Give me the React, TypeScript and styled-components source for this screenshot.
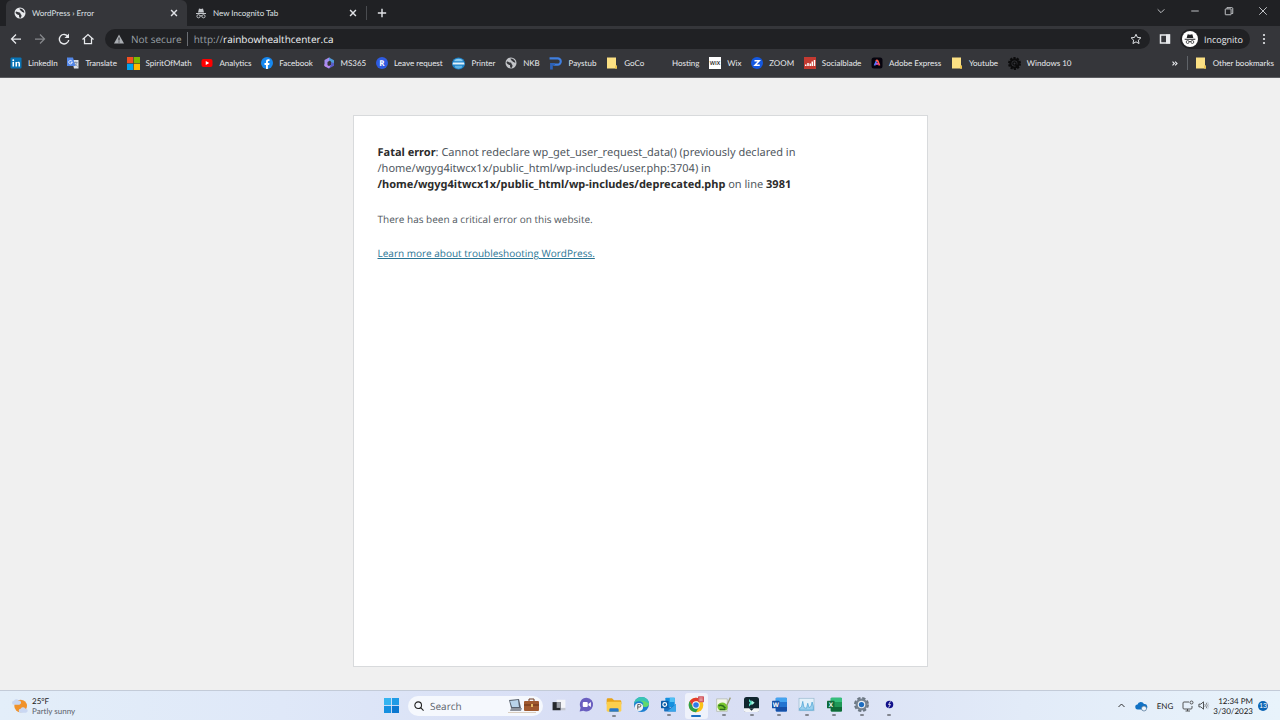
import React from "react";
import styled, { createGlobalStyle } from "styled-components";

const GlobalStyle = createGlobalStyle`
  *, *::before, *::after { box-sizing: border-box; }
  body { margin: 0; background: #f0f0f0; font-family: "Open Sans", "Noto Sans", sans-serif; text-rendering: geometricPrecision; }
  button, input { font: inherit; color: inherit; text-rendering: inherit; background: none; border: 0; padding: 0; margin: 0; outline: 0; }
  button { display: inline-flex; align-items: center; justify-content: center; }
  svg { display: block; flex: none; overflow: visible; }
  h1, p { margin: 0; }
`;

const smallFont = "Lato, sans-serif";

const Desktop = styled.div`
  min-height: 100vh;
  display: flex;
  flex-direction: column;
`;

/* ---------- browser chrome ---------- */

const TabStrip = styled.header`
  display: flex;
  align-items: stretch;
  height: 26px;
  padding-left: 6px;
  background: #202124;
  color: #dfe1e5;
  font-family: ${smallFont};
  font-size: 8px;
`;

const Tab = styled.div<{ $active?: boolean }>`
  display: flex;
  align-items: center;
  gap: 6px;
  width: ${(p) => (p.$active ? 181 : 179)}px;
  padding: 0 8px;
  border-radius: 6px 6px 0 0;
  background: ${(p) => (p.$active ? "#35363a" : "transparent")};
`;

const TabTitle = styled.span`
  flex: 1;
  white-space: nowrap;
`;

const Separator = styled.span<{ $color: string }>`
  width: 1px;
  height: 14px;
  align-self: center;
  flex: none;
  background: ${(p) => p.$color};
`;

const IconButton = styled.button<{ $width?: number }>`
  width: ${(p) => p.$width ?? 24}px;
  flex: none;
`;

const WindowControls = styled.div`
  display: flex;
  height: 22px;
  margin-left: auto;
`;

const Toolbar = styled.div`
  display: flex;
  align-items: center;
  height: 26px;
  padding: 0 4px;
  background: #35363a;
  color: #e8eaed;
`;

const AddressBar = styled.form`
  display: flex;
  align-items: center;
  flex: 1;
  height: 20px;
  margin: 0 4px 0 5px;
  padding: 0 8px;
  border-radius: 10px;
  background: #202124;
  color: #9aa0a6;
  font-size: 10px;
`;

const SecurityButton = styled.button`
  gap: 6px;
  margin-right: 5px;
`;

const Scheme = styled.label`
  margin-left: 6px;
`;

const AddressInput = styled.input`
  flex: 1;
  min-width: 0;
  color: #f1f3f4;
`;

const ProfileButton = styled.button`
  gap: 6px;
  height: 20px;
  margin: 0 2px 0 3px;
  padding: 0 7px 0 2px;
  border-radius: 10px;
  background: #202124;
  font-size: 9px;
`;

const BookmarksBar = styled.nav`
  display: flex;
  align-items: center;
  height: 26px;
  padding: 0 6px 3px 10px;
  border-bottom: 1px solid #5b5c60;
  background: #35363a;
  color: #e8eaed;
  font-family: ${smallFont};
  font-size: 8px;
`;

const BookmarkList = styled.div`
  display: flex;
  justify-content: space-between;
  flex: 1;
  margin-right: 100px;
`;

const Bookmark = styled.a`
  display: flex;
  align-items: center;
  gap: 6px;
  color: inherit;
  text-decoration: none;
  white-space: nowrap;
`;

const Overflow = styled.div`
  display: flex;
  align-items: center;
  gap: 7px;
`;

/* ---------- web page ---------- */

const Page = styled.main`
  flex: 1;
  display: flex;
  padding: 37px 24px 23px;
`;

const ErrorCard = styled.section`
  width: 100%;
  max-width: 575px;
  margin: 0 auto;
  padding: 29px 24px;
  border: 1px solid #d8dadc;
  background: #fff;
  color: #50575e;
  font-size: 10px;
  line-height: 16px;

  p + p { margin-top: 18px; }
  a { color: #2a7595; }
`;

const FatalError = styled.p`
  max-width: 460px;
  margin-bottom: 18px;
  font-family: "Noto Sans", sans-serif;
  font-size: 11px;

  b { color: #2c2c2c; }
`;

/* ---------- taskbar ---------- */

const Taskbar = styled.footer`
  display: grid;
  grid-template-columns: 1fr auto 1fr;
  height: 30px;
  border-top: 1px solid #c3cbd8;
  background: linear-gradient(90deg, #e3eef9 0%, #dfe8f8 22%, #d8def5 45%, #d9dff4 60%, #e2ebf8 80%, #e8f3fb 100%);
  color: #222;
  font-family: ${smallFont};
  font-size: 8px;
  line-height: 10px;
`;

const Weather = styled.button`
  justify-self: start;
  gap: 4px;
  margin-left: 12px;
  text-align: left;
`;

const Muted = styled.span`
  color: #5b626b;
`;

const Pinned = styled.div`
  display: flex;
  align-items: center;
`;

const SearchBox = styled.label`
  display: flex;
  align-items: center;
  gap: 6px;
  width: 135px;
  height: 20px;
  margin: 0 2px 0 3px;
  padding: 0 2px 0 6px;
  border-radius: 10px;
  background: #f5f8fd;
  font-family: "Open Sans", sans-serif;
  font-size: 10px;

  input { flex: 1; min-width: 0; }
  input::placeholder { color: #5b626b; opacity: 1; }
`;

const Apps = styled.div`
  display: grid;
  grid-template-columns: repeat(13, 1fr);
  width: 358px;
`;

const AppButton = styled.button<{ $state: "idle" | "open" | "active" }>`
  flex-direction: column;
  gap: 2px;
  height: 26px;
  margin: 0 2px;
  padding-top: 2px;
  border-radius: 3px;
  background: ${(p) => (p.$state === "active" ? "#eff2fb" : "transparent")};

  &::after {
    content: "";
    width: ${(p) => (p.$state === "active" ? 10 : 4)}px;
    height: 2px;
    border-radius: 1px;
    background: ${(p) => ({ idle: "transparent", open: "#82868f", active: "#1a6fc4" })[p.$state]};
  }
`;

const Tray = styled.div`
  display: flex;
  align-items: center;
  justify-self: end;
  padding-right: 12px;
`;

const TrayButton = styled.button<{ $width: number }>`
  width: ${(p) => p.$width}px;
`;

const Clock = styled.time`
  width: 40px;
  margin: 0 5px 0 4px;
  text-align: right;
`;

const Lines = styled.span`
  display: flex;
  flex-direction: column;
`;

const Count = styled.button`
  width: 10px;
  height: 10px;
  border-radius: 5px;
  background: #0a64b4;
  color: #fff;
  font-size: 7px;
`;

/* ---------- icons ---------- */

type SvgProps = { size?: number; box?: number; children: React.ReactNode };
const Svg = ({ size = 12, box = 24, children }: SvgProps) => (
  <svg width={size} height={size} viewBox={`0 0 ${box} ${box}`} fill="none" aria-hidden="true">
    {children}
  </svg>
);

const Line = ({ d, size = 12, width = 2, color = "currentColor" }: { d: string; size?: number; width?: number; color?: string }) => (
  <Svg size={size}>
    <path d={d} stroke={color} strokeWidth={width} />
  </Svg>
);

const Globe = ({ color = "#e8eaed", bg = "#35363a" }) => (
  <Svg>
    <circle cx="12" cy="12" r="11" fill={color} />
    <path d="M4 9c3 0 4 2 7 2 3 0 1 3 3 4s1 4-1 7c-3 0-3-4-3-6-3 0-6-2-7-5zM11 3c0 3 2 2 2 4 0 1 3 1 3 3 2 0 3 2 5 1-1-4-4-8-10-8z" fill={bg} />
  </Svg>
);

const Spy = ({ size = 12, color = "#c4c7cb" }) => (
  <Svg size={size}>
    <path d="M8 3l4 1 4-1 2 8H6zM2 12h20v2H2z" fill={color} />
    <g stroke={color} strokeWidth="1.800">
      <circle cx="7" cy="18.500" r="3.200" />
      <circle cx="17" cy="18.500" r="3.200" />
      <path d="M10 18q2-1.500 4 0" />
    </g>
  </Svg>
);

const Folder = () => (
  <Svg>
    <path d="M2 1h18v15l2 2v5H2z" fill="#fbe083" />
    <path d="M18 17l4 1v5h-4z" fill="#efc64e" />
  </Svg>
);

const glyphFont = '"Open Sans", sans-serif';

const LinkedInIcon = () => (
  <Svg>
    <rect x="1" y="1" width="22" height="22" rx="2" fill="#0a74b5" />
    <path d="M5 10h3v9H5zM11 10h3v9h-3zM14 13c0-2 3-2 3 0v6h3v-6c0-4-4-4-6-2z" fill="#fff" />
    <circle cx="6.500" cy="6.500" r="1.900" fill="#fff" />
  </Svg>
);

const TranslateIcon = () => (
  <Svg>
    <path d="M10 6h13v17H14z" fill="#dce0e6" />
    <path d="M0 1h12l5 17H0z" fill="#5387e8" />
    <path d="M10 8.500a3.500 3.500 0 1 0 .5 2H7.500" stroke="#fff" strokeWidth="1.700" />
    <path d="M14 11h7M17.500 9v2M20 11c-1 4-3 5-4 6M16 13l5 6" stroke="#6b7c98" strokeWidth="1.400" />
  </Svg>
);

const MicrosoftIcon = () => (
  <Svg size={13}>
    <path d="M0 0h11.500v11.500H0z" fill="#f25022" />
    <path d="M12.500 0H24v11.500H12.500z" fill="#7fba00" />
    <path d="M0 12.500h11.500V24H0z" fill="#00a4ef" />
    <path d="M12.500 12.500H24V24H12.500z" fill="#ffb900" />
  </Svg>
);

const YouTubeIcon = () => (
  <Svg>
    <rect x="1" y="4" width="22" height="16" rx="4" fill="#f00" />
    <path d="M9.500 8l7 4-7 4z" fill="#fff" />
  </Svg>
);

const FacebookIcon = () => (
  <Svg>
    <circle cx="12" cy="12" r="12" fill="#1688f0" />
    <path d="M10 24v-8H7v-4h3V9.500c0-3.500 2-5 4.500-5l2.500.2V8h-1.500C14 8 13.800 9 13.800 10v2H17l-.6 4h-2.600v8z" fill="#fff" />
  </Svg>
);

const Microsoft365Icon = () => (
  <Svg>
    <path d="M12 1L3 6v12l6 3.500V10l4-2.500V1z" fill="#a58cf0" />
    <path d="M12 1l10 5.500V13l-6-2V9l-4-2z" fill="#4f9bd8" />
    <path d="M22 12v5.500L12 23l-4-2 8-5v-5z" fill="#5a5cc8" />
    <path d="M3 14v4l9 5 4-7-4 2z" fill="#b98af0" />
  </Svg>
);

const LeaveIcon = () => (
  <Svg>
    <circle cx="12" cy="12" r="12" fill="#2f5be0" />
    <text x="12" y="17.500" textAnchor="middle" fontFamily={glyphFont} fontWeight="700" fontSize="16" fill="#fff">R</text>
  </Svg>
);

const PrinterIcon = () => (
  <Svg size={13}>
    <ellipse cx="12" cy="12" rx="12" ry="11" fill="#1d83c9" />
    <path d="M5 5q7-4 14 0l1 3H4z" fill="#8acbf0" />
    <path d="M2 10h20l1 4H1z" fill="#e2f1fa" />
    <path d="M5 16h14l-1 4q-6 3-12 0z" fill="#5fb2e2" />
  </Svg>
);

const PaystubIcon = () => (
  <Svg size={13}>
    <path d="M1 2.500h15a5 5 0 0 1 0 11.500H8" stroke="#3f7fe0" strokeWidth="4" />
    <path d="M2 11h9v4H7v8H2z" fill="#2d62b8" />
  </Svg>
);

const WixIcon = () => (
  <Svg>
    <rect width="24" height="24" fill="#fff" />
    <text x="12" y="16" textAnchor="middle" fontFamily={glyphFont} fontWeight="600" fontSize="11" fill="#111">WIX</text>
  </Svg>
);

const ZoomIcon = () => (
  <Svg>
    <circle cx="12" cy="12" r="12" fill="#1458e0" />
    <path d="M7 7.500h9.500L8 16.500h9.500" stroke="#fff" strokeWidth="3" />
  </Svg>
);

const SocialbladeIcon = () => (
  <Svg>
    <rect width="24" height="24" fill="#c43a31" />
    <path d="M2 15h3v3H2zM6.500 12h3v6h-3zM11 13h3v5h-3zM15 9h3v9h-3zM19.500 6h3v12h-3z" fill="#fff" />
  </Svg>
);

const AdobeIcon = () => (
  <Svg>
    <rect x="1" y="1" width="22" height="22" rx="5" fill="#05030d" />
    <path d="M7 17L11 8" stroke="#4a7dff" strokeWidth="3.500" />
    <path d="M10 8q2-3 4 1l3 8" stroke="#ff5a4c" strokeWidth="3.500" />
    <path d="M10 15q2-3 4 0" stroke="#e050e0" strokeWidth="3" />
  </Svg>
);

const DarkGear = () => (
  <Svg size={13}>
    <circle cx="12" cy="12" r="10" stroke="#0c0c0d" strokeWidth="4" strokeDasharray="3.900 2.380" />
    <circle cx="12" cy="12" r="7.500" stroke="#0c0c0d" strokeWidth="4" />
    <circle cx="12" cy="12" r="3" stroke="#0c0c0d" strokeWidth="2.500" />
    <path d="M14 14l5 5" stroke="#0c0c0d" strokeWidth="3.500" />
  </Svg>
);

const bookmarks: [string, React.ReactNode][] = [
  ["LinkedIn", <LinkedInIcon />],
  ["Translate", <TranslateIcon />],
  ["SpiritOfMath", <MicrosoftIcon />],
  ["Analytics", <YouTubeIcon />],
  ["Facebook", <FacebookIcon />],
  ["MS365", <Microsoft365Icon />],
  ["Leave request", <LeaveIcon />],
  ["Printer", <PrinterIcon />],
  ["NKB", <Globe color="#c3c5c9" />],
  ["Paystub", <PaystubIcon />],
  ["GoCo", <Folder />],
  ["Hosting", <Svg>{null}</Svg>],
  ["Wix", <WixIcon />],
  ["ZOOM", <ZoomIcon />],
  ["Socialblade", <SocialbladeIcon />],
  ["Adobe Express", <AdobeIcon />],
  ["Youtube", <Folder />],
  ["Windows 10", <DarkGear />],
];

const OfficeIcon = ({ letter, dark, mid, light }: { letter: string; dark: string; mid: string; light: string }) => (
  <Svg size={15}>
    <rect x="6" y="1" width="18" height="22" rx="1.500" fill={mid} />
    <path d="M6 2.500A1.500 1.500 0 0 1 7.500 1H15v7H6zM15 1h7.500A1.500 1.500 0 0 1 24 2.500V8h-9z" fill={light} />
    <path d="M6 16h18v5.500a1.500 1.500 0 0 1-1.500 1.500h-15A1.500 1.500 0 0 1 6 21.500z" fill={dark} />
    <rect x="0" y="6" width="12" height="12" rx="1" fill={dark} />
    <text x="6" y="15.500" textAnchor="middle" fontFamily={glyphFont} fontWeight="700" fontSize="10" fill="#fff">{letter}</text>
  </Svg>
);

const apps: [string, "idle" | "open" | "active", React.ReactNode][] = [
  ["Task view", "idle", (
    <Svg size={14}>
      <path d="M8 3h15v14H8z" fill="#f4f5f8" />
      <path d="M1 7h14v14H1z" fill="#26282c" />
      <path d="M8 7h7v10H8z" fill="#9a9da5" />
      <path d="M15 17h8v4h-8z" fill="#c4c7cf" />
    </Svg>
  )],
  ["Chat", "idle", (
    <Svg size={15}>
      <path d="M12 1a11 11 0 1 1-5 21l-6 1 1.500-6A11 11 0 0 1 12 1z" fill="#6a5fc0" />
      <rect x="6" y="8" width="8" height="8" rx="1.500" fill="#fff" />
      <path d="M15 11l4-3v8l-4-3z" fill="#fff" />
    </Svg>
  )],
  ["File Explorer", "open", (
    <Svg size={16}>
      <path d="M1 4q0-2 2-2h6l3 3h9q2 0 2 2v4H1z" fill="#e8a317" />
      <rect x="1" y="7" width="22" height="15" rx="2" fill="#fccf4d" />
      <path d="M5 22v-3q0-2 2-2h10q2 0 2 2v3z" fill="#2878c8" />
    </Svg>
  )],
  ["Edge", "idle", (
    <Svg size={15}>
      <circle cx="12" cy="12" r="12" fill="#1b7fd0" />
      <path d="M0 11C1 4 6 0 12 0c8 0 12 5 12 10 0 4-3 6-6 6-4 0-4-2-3-4C15 7 5 4 0 11z" fill="#39c5b4" />
      <path d="M24 10c0 4-3 6-6 6-4 0-4-2-3-4 1-4-3-6-6-6 8-1 11 3 15 4z" fill="#62d86c" />
      <circle cx="8" cy="16" r="6.500" fill="#f1f3f5" />
      <path d="M6 20v-8h3a2 2 0 0 1 0 4H6" stroke="#555" strokeWidth="1.500" />
    </Svg>
  )],
  ["Outlook", "open", (
    <Svg size={15}>
      <rect x="7" y="1" width="15" height="15" rx="1" fill="#1490df" />
      <path d="M14 1h8v7h-8z" fill="#50c0f5" />
      <path d="M5 11l10 6 9-6v11q0 1-1 1H6q-1 0-1-1z" fill="#1a70c0" />
      <path d="M24 11v12H10z" fill="#38a5ea" />
      <rect x="0" y="6" width="12" height="12" rx="1" fill="#0a5ba8" />
      <circle cx="6" cy="12" r="3" stroke="#fff" strokeWidth="1.900" />
    </Svg>
  )],
  ["Chrome", "active", (
    <Svg size={16}>
      <circle cx="12" cy="12" r="11" fill="#fbc116" />
      <path d="M2.500 6.500A11 11 0 0 1 21.500 6.500H12L7.200 14.700z" fill="#e33b2e" />
      <path d="M2.500 6.500A11 11 0 0 0 12 23l4.800-8.200H7.200z" fill="#2b9f4b" />
      <circle cx="12" cy="12" r="5.500" fill="#fff" />
      <circle cx="12" cy="12" r="4.200" fill="#2f79e8" />
      <rect x="15" y="-1" width="9" height="9" rx="1" fill="#d2545c" />
      <path d="M17 1.500h5M17 3.500h5M17 5.500h5" stroke="#f5c8ca" />
    </Svg>
  )],
  ["Notepad++", "open", (
    <Svg size={15}>
      <path d="M1 3h17v20H1z" fill="#f4f6ec" stroke="#a8b0a0" />
      <path d="M3 12q6-6 13-1 5 4 1 10H5q-4-4-2-9z" fill="#78c62e" />
      <path d="M4 14q6-3 11 4M6 20h9" stroke="#2e6e1c" strokeWidth="2.500" />
      <path d="M23 1l-6 13" stroke="#9a9a72" strokeWidth="2" />
    </Svg>
  )],
  ["Filmora", "open", (
    <Svg size={15}>
      <rect width="24" height="24" rx="4" fill="#10262f" />
      <path d="M8 3l6 6-6 6V11l2-2-2-2z" fill="#4fe0c2" />
      <path d="M12 5l5 4-5 4z" fill="#a9f5e4" />
      <path d="M0 18h24v3q0 3-3 3H3q-3 0-3-3z" fill="#f3f5f7" />
      <path d="M8 18h8l-4 4z" fill="#10262f" />
    </Svg>
  )],
  ["Word", "open", <OfficeIcon letter="W" dark="#1650a8" mid="#2374d0" light="#45a4f0" />],
  ["Task Manager", "open", (
    <Svg size={15}>
      <rect x="0" y="2" width="24" height="20" fill="#e3f1fa" stroke="#93b5cc" />
      <path d="M1 18l3-2 2-9 2 10 4 1 2-8 2 7 3-2 2-7 2 7v6H1z" fill="#9bd0ee" stroke="#3f9bd0" />
    </Svg>
  )],
  ["Excel", "open", <OfficeIcon letter="X" dark="#0e6b38" mid="#1f9857" light="#35bf7c" />],
  ["Settings", "open", (
    <Svg size={15}>
      <circle cx="12" cy="12" r="10" stroke="#6b7682" strokeWidth="4" strokeDasharray="5 2.854" />
      <circle cx="12" cy="12" r="9.500" fill="#76828f" />
      <circle cx="12" cy="12" r="6" fill="#e9edf2" />
      <circle cx="12" cy="12" r="4.200" fill="#1c6cc0" />
    </Svg>
  )],
  ["Recorder", "open", (
    <Svg size={15}>
      <circle cx="12" cy="12" r="6" fill="#10108a" />
      <path d="M13.500 7l-3 5h3l-3 5" stroke="#fff" strokeWidth="1.300" />
    </Svg>
  )],
];

const closeMark = "M5 5l14 14M19 5L5 19";

export default function App() {
  return (
    <Desktop>
      <GlobalStyle />
      <TabStrip>
        <Tab $active>
          <Globe />
          <TabTitle>WordPress › Error</TabTitle>
          <IconButton $width={10} aria-label="Close tab"><Line d={closeMark} size={10} width={3.5} /></IconButton>
        </Tab>
        <Tab>
          <Spy />
          <TabTitle>New Incognito Tab</TabTitle>
          <IconButton $width={10} aria-label="Close tab"><Line d={closeMark} size={10} width={3.5} /></IconButton>
        </Tab>
        <Separator $color="#4a4c50" />
        <IconButton $width={30} aria-label="New tab"><Line d="M12 2v20M2 12h20" size={10} width={3.5} /></IconButton>
        <WindowControls>
          <IconButton $width={34} aria-label="Search tabs"><Line d="M4 8l8 8 8-8" size={10} /></IconButton>
          <IconButton $width={34} aria-label="Minimize"><Line d="M3 12h18" size={10} /></IconButton>
          <IconButton $width={34} aria-label="Restore"><Line d="M3 8q0-1 1-1h12q1 0 1 1v12q0 1-1 1H4q-1 0-1-1zM7 6V4h12q2 0 2 2v12h-3" size={10} /></IconButton>
          <IconButton $width={34} aria-label="Close window"><Line d="M3 3l18 18M21 3L3 21" size={10} /></IconButton>
        </WindowControls>
      </TabStrip>

      <Toolbar>
        <IconButton aria-label="Back"><Line d="M22 12H3M12 3l-9 9 9 9" width={2.5} /></IconButton>
        <IconButton aria-label="Forward"><Line d="M2 12h19M12 3l9 9-9 9" width={2.5} color="#85878b" /></IconButton>
        <IconButton aria-label="Reload">
          <Svg>
            <path d="M20 7a9.500 9.500 0 1 0 1.500 7" stroke="currentColor" strokeWidth="2.800" />
            <path d="M22 1v9h-9z" fill="currentColor" />
          </Svg>
        </IconButton>
        <IconButton aria-label="Home"><Line d="M1 13L12 3l11 10M5 11v10h14V11" width={2.5} /></IconButton>
        <AddressBar onSubmit={(e) => e.preventDefault()}>
          <SecurityButton type="button">
            <Svg>
              <path d="M12 3l10 18H2z" fill="#a9adb2" />
              <path d="M12 9v6M12 17v2" stroke="#202124" strokeWidth="2" />
            </Svg>
            Not secure
          </SecurityButton>
          <Separator $color="#6a6d72" />
          <Scheme htmlFor="address">http://</Scheme>
          <AddressInput id="address" defaultValue="rainbowhealthcenter.ca" spellCheck={false} />
          <IconButton type="button" $width={12} aria-label="Bookmark this page">
            <Line d="M12 2.500l2.900 6.300 6.900.8-5.100 4.700 1.400 6.800-6.100-3.400-6.100 3.400 1.400-6.800-5.100-4.700 6.900-.8z" color="#dfe1e5" />
          </IconButton>
        </AddressBar>
        <IconButton $width={23} aria-label="Side panel">
          <Svg>
            <path d="M3 4h18v16H3z" stroke="currentColor" strokeWidth="3" />
            <path d="M14 3h8v18h-8z" fill="currentColor" />
          </Svg>
        </IconButton>
        <ProfileButton>
          <Svg size={16}>
            <circle cx="12" cy="12" r="12" fill="#fff" />
            <path d="M8.500 5l3.500.8 3.500-.8 1.500 5.500H7zM4 11.500h16V13H4z" fill="#202124" />
            <g stroke="#202124" strokeWidth="1.100">
              <circle cx="8.500" cy="16.500" r="2.200" />
              <circle cx="15.500" cy="16.500" r="2.200" />
              <path d="M10.500 16q1.500-1 3 0" />
            </g>
          </Svg>
          Incognito
        </ProfileButton>
        <IconButton aria-label="Menu">
          <Svg>
            <g fill="currentColor">
              <circle cx="12" cy="4" r="2.200" />
              <circle cx="12" cy="12" r="2.200" />
              <circle cx="12" cy="20" r="2.200" />
            </g>
          </Svg>
        </IconButton>
      </Toolbar>

      <BookmarksBar>
        <BookmarkList>
          {bookmarks.map(([label, icon]) => (
            <Bookmark href="#" key={label}>
              {icon}
              {label}
            </Bookmark>
          ))}
        </BookmarkList>
        <Overflow>
          <IconButton $width={8} aria-label="More bookmarks"><Line d="M4 7l5 5-5 5M11 7l5 5-5 5" size={9} width={3} /></IconButton>
          <Separator $color="#5f6368" />
          <Bookmark href="#"><Folder />Other bookmarks</Bookmark>
        </Overflow>
      </BookmarksBar>

      <Page>
        <ErrorCard>
          <FatalError>
            <b>Fatal error</b>: Cannot redeclare wp_get_user_request_data() (previously declared in
            <br />
            /home/wgyg4itwcx1x/public_html/wp-includes/user.php:3704) in
            <br />
            <b>/home/wgyg4itwcx1x/public_html/wp-includes/deprecated.php</b> on line <b>3981</b>
          </FatalError>
          <p>There has been a critical error on this website.</p>
          <p><a href="#">Learn more about troubleshooting WordPress.</a></p>
        </ErrorCard>
      </Page>

      <Taskbar>
        <Weather>
          <Svg size={16}>
            <circle cx="13" cy="12" r="9.500" fill="#f0922b" />
            <path d="M3 10a3 3 0 0 1 0-6 4 4 0 0 1 7 0 3 3 0 0 1 1 6z" fill="#c9d7f2" />
            <path d="M13 22a3 3 0 0 1 0-6 4 4 0 0 1 7 0 3 3 0 0 1 1 6z" fill="#c9d7f2" />
          </Svg>
          <Lines>
            <span>25°F</span>
            <Muted>Partly sunny</Muted>
          </Lines>
        </Weather>

        <Pinned>
          <IconButton $width={28} aria-label="Start">
            <Svg size={15}>
              <path d="M0 0h11.300v11.300H0z" fill="#35b4f0" />
              <path d="M12.700 0H24v11.300H12.700z" fill="#1f9be6" />
              <path d="M0 12.700h11.300V24H0z" fill="#1590e0" />
              <path d="M12.700 12.700H24V24H12.700z" fill="#0b78d0" />
            </Svg>
          </IconButton>
          <SearchBox>
            <Svg size={10}>
              <circle cx="10" cy="10" r="8" stroke="#222" strokeWidth="2.600" />
              <path d="M16 16l7 7" stroke="#222" strokeWidth="2.600" />
            </Svg>
            <input type="search" placeholder="Search" aria-label="Search" />
            <svg width="34" height="16" viewBox="0 0 34 16" aria-hidden="true">
              <path d="M1 14h28v1H1z" fill="#d9cdbf" />
              <path d="M2 2l10-1 2 9H4z" fill="#58616e" />
              <path d="M3 3l8-1 1 7H5z" fill="#b9d3ea" />
              <path d="M4 10h11l-1 3H3z" fill="#8d929c" />
              <path d="M22 4V1h5v3" fill="none" stroke="#6e3b20" />
              <rect x="17" y="3" width="15" height="10" rx="1" fill="#a0592f" />
              <path d="M17 7h15" stroke="#693317" />
              <path d="M24 6h2v3h-2z" fill="#e8bb66" />
            </svg>
          </SearchBox>
          <Apps>
            {apps.map(([name, state, icon]) => (
              <AppButton key={name} $state={state} aria-label={name}>{icon}</AppButton>
            ))}
          </Apps>
        </Pinned>

        <Tray>
          <TrayButton $width={20} aria-label="Hidden icons"><Line d="M4 16l8-8 8 8" size={9} width={2.5} /></TrayButton>
          <TrayButton $width={20} aria-label="OneDrive">
            <Svg>
              <path d="M6 19a5 5 0 0 1-1-10 7 7 0 0 1 13-1 5 5 0 0 1 2 11z" fill="#1272c4" />
              <circle cx="18" cy="17" r="5" fill="#eef5fb" stroke="#57789a" strokeWidth="1.500" />
            </Svg>
          </TrayButton>
          <TrayButton $width={28}>ENG</TrayButton>
          <TrayButton $width={18} aria-label="Network">
            <Svg>
              <path d="M14 4H4q-2 0-2 2v10q0 2 2 2h14q2 0 2-2v-4M7 22h9M11 18v4" stroke="#444" strokeWidth="1.800" />
              <circle cx="19" cy="5" r="3" stroke="#444" strokeWidth="1.800" />
            </Svg>
          </TrayButton>
          <TrayButton $width={12} aria-label="Volume">
            <Svg size={11}>
              <path d="M2 9h4l6-5v16l-6-5H2z" stroke="#333" strokeWidth="1.800" />
              <path d="M15 9q2 3 0 6M18 6q4 6 0 12" stroke="#555" strokeWidth="1.500" />
              <path d="M21 4q5 8 0 16" stroke="#b5bcc5" strokeWidth="1.500" />
            </Svg>
          </TrayButton>
          <Clock dateTime="2023-03-30T12:34">
            <Lines>
              <span>12:34 PM</span>
              <span>3/30/2023</span>
            </Lines>
          </Clock>
          <Count aria-label="13 notifications">13</Count>
        </Tray>
      </Taskbar>
    </Desktop>
  );
}
